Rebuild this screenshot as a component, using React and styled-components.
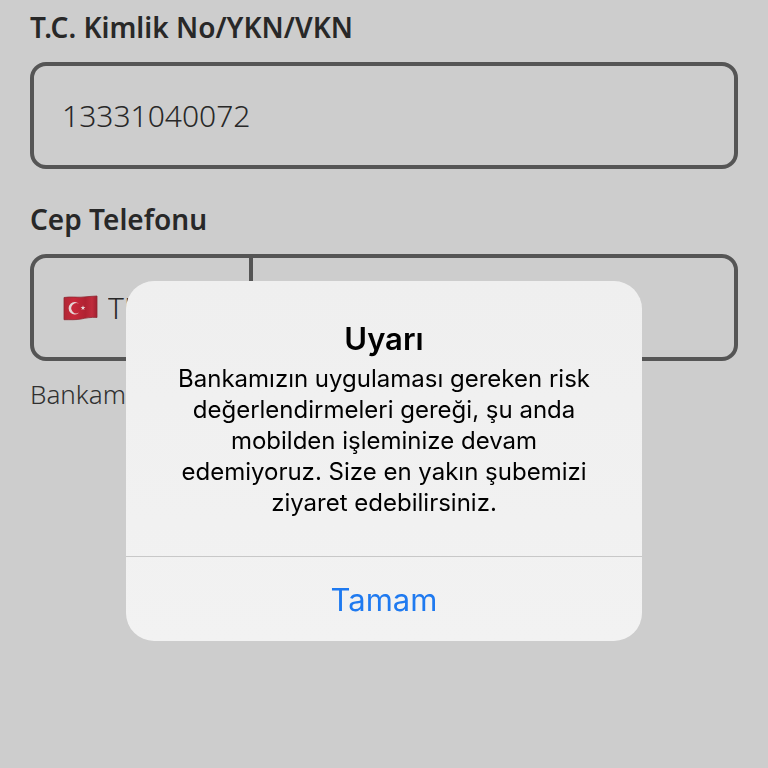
import React, { useState } from 'react';
import styled, { createGlobalStyle } from 'styled-components';

const GlobalStyle = createGlobalStyle`
* {
box-sizing: border-box;
}
body {
margin: 0;
background-color: #cdcdcd;
color: #282828;
font-family: 'Noto Sans', 'Open Sans', sans-serif;
}
`

const Form = styled.form`
display: flex;
flex-direction: column;
gap: 28px;
padding: 5px 30px 0;
`
const Field = styled.div`
display: flex;
flex-direction: column;
`
const Label = styled.label`
margin-bottom: 13px;
font-size: 28px;
font-weight: 600;
line-height: 44px;
`
const Box = styled.div`
display: flex;
height: 107px;
border: 4px solid #555555;
border-radius: 16px;
overflow: hidden;
`
const Input = styled.input`
flex: 1;
min-width: 0;
padding: 0 28px;
border: none;
outline: none;
background: transparent;
color: inherit;
font-family: inherit;
font-size: 30px;
font-weight: 300;
`
const Country = styled.div`
display: flex;
align-items: center;
gap: 10px;
flex: 0 0 219px;
padding-left: 29px;
border-right: 4px solid #555555;
`
const CountrySelect = styled.select`
flex: 1;
min-width: 0;
padding: 0;
border: none;
outline: none;
appearance: none;
background: transparent;
color: inherit;
font-family: inherit;
font-size: 30px;
font-weight: 300;
`
const Hint = styled.p`
margin: 15px 0 0;
color: #303030;
font-size: 26px;
font-weight: 300;
line-height: 36px;
`

const Overlay = styled.div`
position: fixed;
inset: 0;
display: flex;
justify-content: center;
align-items: flex-start;
padding: 281px 126px 0;
`
const Dialog = styled.div`
width: 100%;
max-width: 516px;
border-radius: 28px;
overflow: hidden;
background: linear-gradient(#efefef, #f2f2f2);
color: #000000;
font-family: Inter, Roboto, sans-serif;
text-align: center;
`
const DialogBody = styled.div`
padding: 38px 44px;
`
const Title = styled.h2`
margin: 0 0 4px;
font-size: 31px;
font-weight: 600;
line-height: 40px;
`
const Message = styled.p`
margin: 0;
font-size: 24px;
line-height: 31px;
`
const DialogButton = styled.button`
display: block;
width: 100%;
height: 85px;
border: none;
border-top: 1px solid #c8c8c8;
background: transparent;
color: #1f7af0;
font-family: inherit;
font-size: 31px;
cursor: pointer;
`

const TurkishFlag = () => (
    <svg width="35" height="26" viewBox="0 0 35 26" aria-hidden="true">
        <defs>
            <linearGradient id="cloth" x1="0" x2="1" y1="0" y2="0">
                <stop offset="0" stopColor="#b02735" />
                <stop offset="0.3" stopColor="#c8283a" />
                <stop offset="0.65" stopColor="#b02232" />
                <stop offset="0.85" stopColor="#c02c3d" />
                <stop offset="1" stopColor="#a02030" />
            </linearGradient>
        </defs>
        <path d="M1 2.5C8 1.5 13 2.4 18 2.2S29 1 34 1V22.5C28 22 23 23 18 24S7 24.6 1 24.7Z" fill="url(#cloth)" stroke="#8e2a33" strokeWidth="0.8" />
        <path d="M16.3 9.3A6 6.3 0 1 0 16.3 17.2A4.9 5 0 1 1 16.3 9.3Z" fill="#e5d5d5" />
        <path d="M20 10.3L20.6 12.1L22.4 12.1L20.9 13.2L21.5 15L20 13.9L18.5 15L19.1 13.2L17.6 12.1L19.4 12.1Z" fill="#e5d5d5" />
    </svg>
)

const App = () => {
    const [idNumber, setIdNumber] = useState('13331040072');
    const [phone, setPhone] = useState('');
    const [open, setOpen] = useState(true);

    return (
        <>
        <GlobalStyle />
        <Form>
            <Field>
                <Label htmlFor="idNumber">T.C. Kimlik No/YKN/VKN</Label>
                <Box>
                    <Input id="idNumber" inputMode="numeric" value={idNumber} onChange={e => setIdNumber(e.target.value)} />
                </Box>
            </Field>
            <Field>
                <Label id="phoneLabel" htmlFor="phone">Cep Telefonu</Label>
                <Box>
                    <Country>
                        <TurkishFlag />
                        <CountrySelect aria-labelledby="phoneLabel">
                            <option>TR</option>
                        </CountrySelect>
                    </Country>
                    <Input id="phone" type="tel" value={phone} onChange={e => setPhone(e.target.value)} />
                </Box>
                <Hint>Bankam</Hint>
            </Field>
        </Form>
        {open && (
            <Overlay>
                <Dialog role="alertdialog" aria-modal="true" aria-labelledby="alertTitle" aria-describedby="alertMessage">
                    <DialogBody>
                        <Title id="alertTitle">Uyarı</Title>
                        <Message id="alertMessage">
                            Bankamızın uygulaması gereken risk değerlendirmeleri gereği, şu anda mobilden işleminize devam edemiyoruz. Size en yakın şubemizi ziyaret edebilirsiniz.
                        </Message>
                    </DialogBody>
                    <DialogButton type="button" onClick={() => setOpen(false)}>Tamam</DialogButton>
                </Dialog>
            </Overlay>
        )}
        </>
    );
};

export default App;
